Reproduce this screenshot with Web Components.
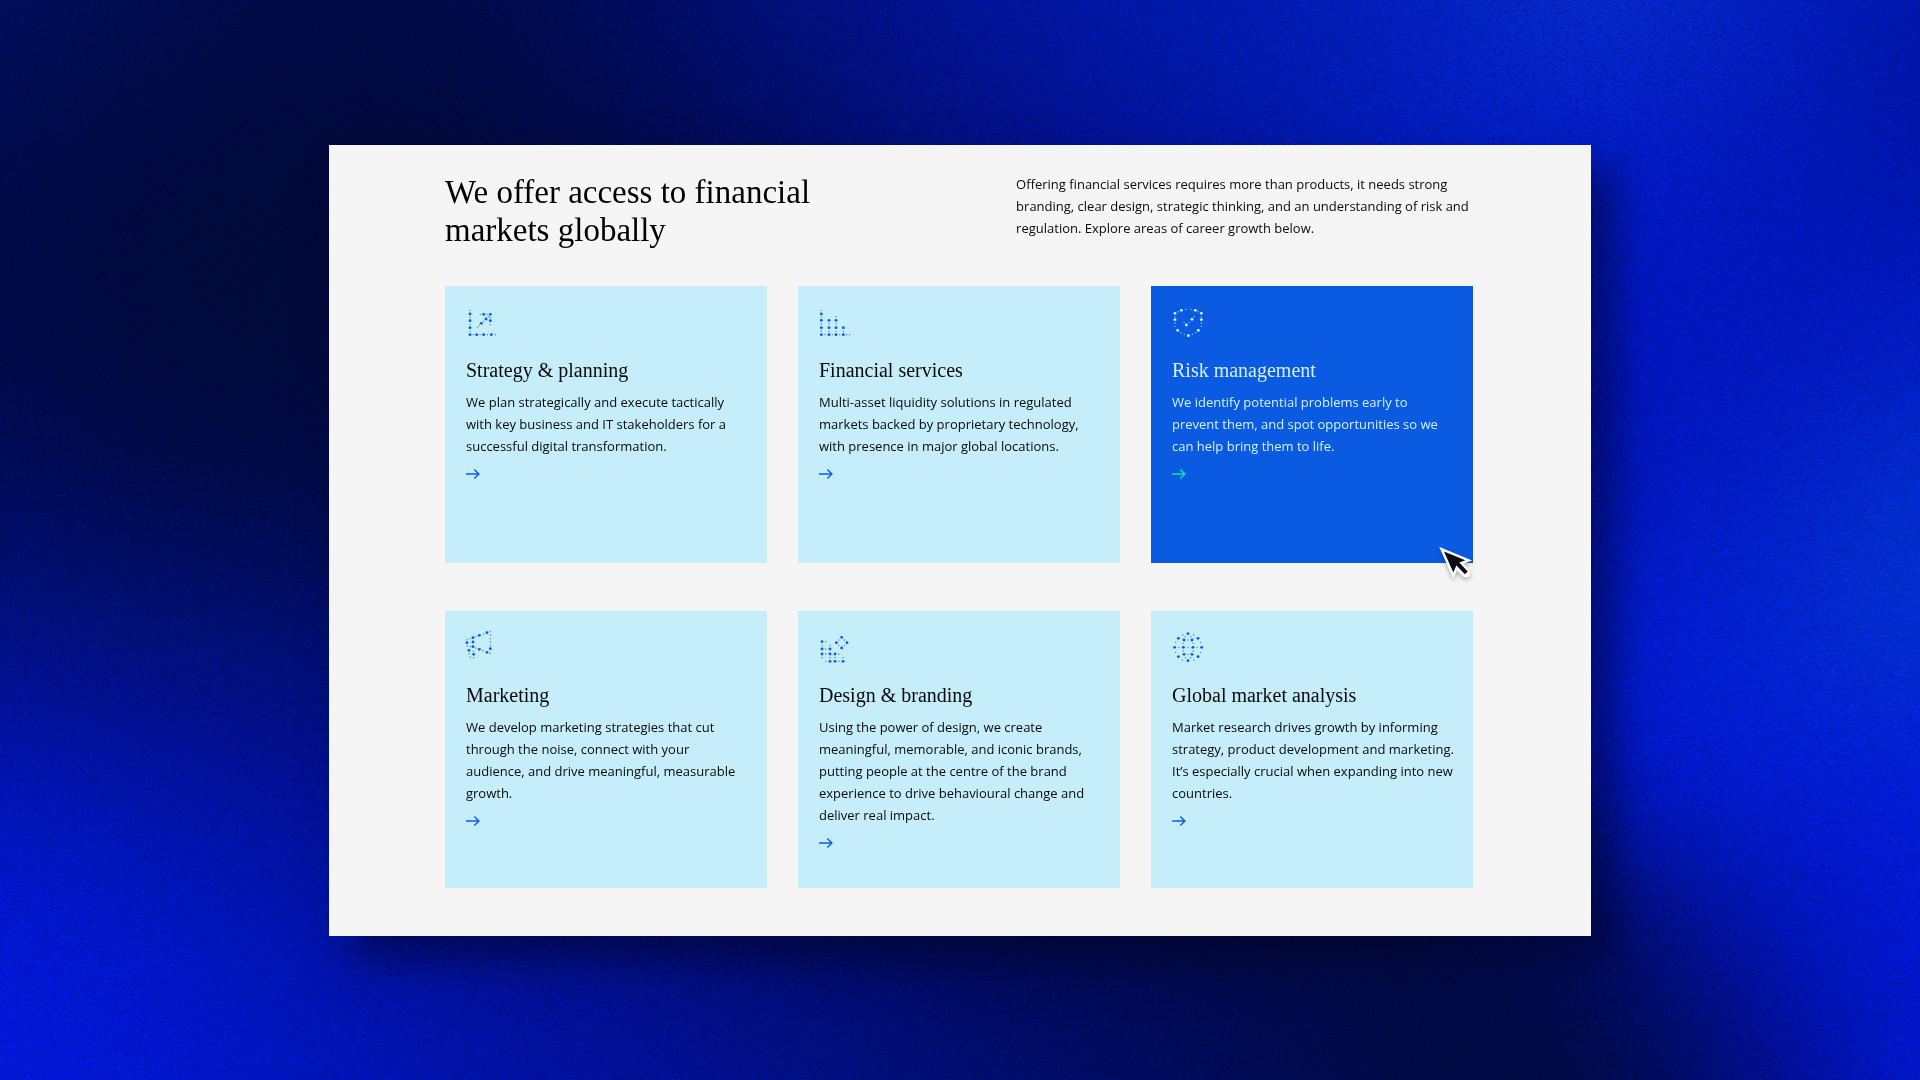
<!DOCTYPE html>
<html lang="en">
<head>
<meta charset="utf-8">
<meta name="viewport" content="width=device-width, initial-scale=1">
<title>Financial markets</title>
<style>
body {
    margin: 0;
    background: #000a44;
    font-family: "Open Sans", Inter, sans-serif;
    color: #0a0a0a;
}
</style>
</head>
<body>
<page-stage>
    <offer-panel>
        <span slot="title">We offer access to financial markets globally</span>
        <span slot="intro">Offering financial services requires more than products, it needs strong branding, clear design, strategic thinking, and an understanding of risk and regulation. Explore areas of career growth below.</span>

        <service-card icon="strategy" name="Strategy &amp; planning">We plan strategically and execute tactically with key business and IT stakeholders for a successful digital transformation.</service-card>
        <service-card icon="finance" name="Financial services">Multi-asset liquidity solutions in regulated markets backed by proprietary technology, with presence in major global locations.</service-card>
        <service-card icon="risk" name="Risk management" active>We identify potential problems early to<br> prevent them, and spot opportunities so we<br> can help bring them to life.<mouse-pointer slot="overlay"></mouse-pointer></service-card>
        <service-card icon="marketing" name="Marketing">We develop marketing strategies that cut<br> through the noise, connect with your<br> audience, and drive meaningful, measurable growth.</service-card>
        <service-card icon="design" name="Design &amp; branding">Using the power of design, we create meaningful, memorable, and iconic brands, putting people at the centre of the brand experience to drive behavioural change and deliver real impact.</service-card>
        <service-card icon="globe" name="Global market analysis">Market research drives growth by informing strategy, product development and marketing. It’s especially crucial when expanding into new countries.</service-card>
    </offer-panel>
</page-stage>

<script>
// Colour mesh for the backdrop, rows from top to bottom
const mesh = [
    '00105e 000c50 000a48 000a4a 000c64 001080 00149c 0018a8 001cb4 0022c0 0a2cc8 0020c0 0014a8',
    '000a4c 00093e 000938 00093c 000a48 000c64 00107c 001294 0016a4 001cbc 001ccc 0018b8 0014a4',
    '000a46 000938 000938 000938 000a40 000a58 000e74 001290 0016a4 0016b4 0016c4 0014b8 0018c0',
    '000a58 000a42 000a42 000a40 000a40 000a58 000e74 001290 0016a4 0014b0 0014b8 001cc4 002ccc',
    '00107c 000f70 000e68 000c58 000c58 000c58 000e74 001290 0016a4 0018b8 0018cc 0024d0 0034cc',
    '0014b4 0012a0 001094 00107c 00107c 000c64 000a54 000a48 000a44 0010a0 0018d4 001cd4 001cd4',
    '0018d4 0016c4 0014a8 001294 001080 000c6c 000a58 000a4a 000a44 000a3e 000a54 0014b8 0018d4',
    '0018d8 0016d0 0014bc 0012a8 00109c 001088 000e74 000c66 000a54 000a44 000a3e 000c80 0018d0'
].map(row => row.split(' ').map(hex => [0, 2, 4].map(i => parseInt(hex.substr(i, 2), 16))));

// Dots of the icons: big ones first, then small ones
const icons = {
    strategy: {
        box: '33 21 96 96',
        big: '45,42 45,62 45,83 45,104 65,104 86,104 109,104 86,43 106,43 106,62 93,57 79,70',
        small: '45,31 45,52 45,73 45,94 55,104 75,104 97,104 121,104 76,43 96,43 106,53 106,73 100,50 86,64 73,76 68,82'
    },
    finance: {
        box: '27 21 96 96',
        big: '34,42 34,61 34,83 34,104 57,61 57,83 57,104 78,61 78,83 78,104 100,83 100,104',
        small: '34,31 34,52 34,72 34,93 57,71 57,94 78,50 78,71 78,94 100,94 45,104 67,104 89,104 110,104 119,104'
    },
    risk: {
        box: '36 21 96 96',
        big: '64,31 106,31 45,40 124,40 45,59 124,59 53,91 115,91 85,107 79,75 96,58',
        small: '54,35 78,28 93,28 115,35 45,50 124,50 45,69 45,79 124,69 124,79 63,98 73,103 97,103 107,98 102,50 72,67 88,67'
    },
    marketing: {
        box: '33 30 96 96',
        big: '54,47 36,62 54,60 54,74 42,85 56,97 73,40 96,32 106,80 96,91 73,82',
        small: '36,53 45,50 37,72 46,74 63,43 62,78 86,36 84,86 106,28 106,39 106,50 106,60 106,71 106,95 43,95 46,105 55,88 56,107'
    },
    design: {
        box: '27 30 96 96',
        big: '36,59 36,81 36,96 60,81 60,96 75,96 60,118 75,118 99,118 95,46 79,62 111,62 95,78',
        small: '47,59 36,70 60,70 47,81 47,96 36,107 60,107 47,118 87,96 75,107 99,107 87,118 86,54 103,54 86,70 103,70'
    },
    globe: {
        box: '36 30 96 96',
        big: '84,35 55,49 114,49 44,76 125,76 55,104 114,104 84,116 72,54 96,54 70,76 99,76 72,97 96,97',
        small: '68,38 101,38 75,44 92,44 47,61 122,61 47,91 122,91 67,114 101,114 70,64 99,64 70,87 99,87 57,76 84,76 111,76 84,54 84,97 77,107 92,107'
    }
};

class PageStage extends HTMLElement {
    constructor() {
        super();
        this.attachShadow({ mode: 'open' });
        this.shadowRoot.innerHTML = `
<style>
:host {
    display: flex;
    justify-content: center;
    align-items: flex-start;
    position: relative;
    box-sizing: border-box;
    min-height: 100vh;
    padding: 145px 24px 144px;
}

canvas {
    position: absolute;
    inset: 0;
    width: 100%;
    height: 100%;
}
</style>
<canvas aria-hidden="true"></canvas>
<slot></slot>
`;
    }

    connectedCallback() {
        this.paint();
        this.onResize = () => this.paint();
        window.addEventListener('resize', this.onResize);
    }

    disconnectedCallback() {
        window.removeEventListener('resize', this.onResize);
    }

    // B-spline weights for four neighbouring mesh points
    weights(count, size) {
        const list = [];
        for (let i = 0; i < size; i++) {
            const pos = i / (size - 1) * (count - 1);
            const base = Math.min(Math.floor(pos), count - 2);
            const t = pos - base;
            const w = [
                (1 - t) ** 3 / 6,
                (3 * t ** 3 - 6 * t ** 2 + 4) / 6,
                (-3 * t ** 3 + 3 * t ** 2 + 3 * t + 1) / 6,
                t ** 3 / 6
            ];
            const idx = [-1, 0, 1, 2].map(d => Math.max(0, Math.min(count - 1, base + d)));
            list.push({ w, idx });
        }
        return list;
    }

    paint() {
        const canvas = this.shadowRoot.querySelector('canvas');
        const width = canvas.width = Math.max(2, this.clientWidth);
        const height = canvas.height = Math.max(2, this.clientHeight);
        const ctx = canvas.getContext('2d');
        const image = ctx.createImageData(width, height);
        const cols = this.weights(mesh[0].length, width);
        const rows = this.weights(mesh.length, height);
        let seed = 7;
        let last = 0;
        let p = 0;

        for (let y = 0; y < height; y++) {
            const { w: wy, idx: iy } = rows[y];
            const line = mesh[0].map((_, c) => [0, 1, 2].map(k =>
                wy.reduce((sum, w, j) => sum + w * mesh[iy[j]][c][k], 0)));
            for (let x = 0; x < width; x++) {
                const { w, idx } = cols[x];
                seed = (Math.imul(seed, 1664525) + 1013904223) >>> 0;
                const rnd = seed / 4294967296 - 0.5;
                const grain = 1 + (rnd + last * 0.5) * 0.22;
                last = rnd;
                for (let k = 0; k < 3; k++) {
                    const v = w[0] * line[idx[0]][k] + w[1] * line[idx[1]][k] +
                        w[2] * line[idx[2]][k] + w[3] * line[idx[3]][k];
                    image.data[p++] = v * grain;
                }
                image.data[p++] = 255;
            }
        }
        ctx.putImageData(image, 0, 0);
    }
}

class OfferPanel extends HTMLElement {
    constructor() {
        super();
        this.attachShadow({ mode: 'open' });
        this.shadowRoot.innerHTML = `
<style>
:host {
    display: block;
    position: relative;
    box-sizing: border-box;
    width: 100%;
    max-width: 1262px;
    padding: 28px 118px 48px 116px;
    background: #f5f5f5;
    box-shadow: 24px 24px 40px rgba(0, 2, 24, 0.5);
}

header {
    display: grid;
    grid-template-columns: 5fr 4fr;
    margin-bottom: 37px;
}

h1 {
    max-width: 400px;
    margin: 0;
    font: 400 33px/38px "Liberation Serif", serif;
    color: #000;
}

p {
    margin: 0;
    font-size: 13px;
    line-height: 22px;
}

.cards {
    display: grid;
    grid-template-columns: repeat(3, 1fr);
    gap: 48px 31px;
}
</style>
<header>
    <h1><slot name="title"></slot></h1>
    <p><slot name="intro"></slot></p>
</header>
<div class="cards"><slot></slot></div>
`;
    }
}

class DotIcon extends HTMLElement {
    constructor() {
        super();
        this.attachShadow({ mode: 'open' });
    }

    connectedCallback() {
        const icon = icons[this.getAttribute('name')];
        const dots = (list, r) => list.split(' ').map(dot => {
            const [x, y] = dot.split(',');
            return `<circle cx="${x}" cy="${y}" r="${r}"/>`;
        }).join('');

        this.shadowRoot.innerHTML = `
<style>
:host {
    display: block;
    width: 32px;
    height: 32px;
}

svg {
    display: block;
    overflow: visible;
    fill: currentColor;
}
</style>
<svg width="32" height="32" viewBox="${icon.box}" aria-hidden="true">
    ${dots(icon.big, 4.3)}
    <g opacity="0.8">${dots(icon.small, 2)}</g>
</svg>
`;
    }
}

class ServiceCard extends HTMLElement {
    constructor() {
        super();
        this.attachShadow({ mode: 'open' });
    }

    connectedCallback() {
        this.shadowRoot.innerHTML = `
<style>
:host {
    --accent: #0b5cee;
    --icon: #0b5cee;
    display: block;
    position: relative;
    box-sizing: border-box;
    min-height: 277px;
    padding: 21px 16px 21px 21px;
    background: #c6edfa;
}

:host([active]) {
    --accent: #14e0ae;
    --icon: #d4f0ff;
    background: #0a5be2;
    color: #d4f0ff;
}

dot-icon {
    color: var(--icon);
    margin-bottom: 19px;
}

h2 {
    margin: 0 0 9px;
    font: 400 20px/24px "Liberation Serif", serif;
}

p {
    margin: 0 0 12px;
    font-size: 13px;
    line-height: 22px;
}

a {
    display: block;
    width: 14px;
    color: var(--accent);
}

a svg {
    display: block;
    fill: none;
    stroke: currentColor;
    stroke-width: 1.4;
}
</style>
<dot-icon name="${this.getAttribute('icon')}"></dot-icon>
<h2></h2>
<p><slot></slot></p>
<a href="#"><svg width="14" height="10" viewBox="0 0 14 10" aria-hidden="true"><path d="M0 5h13M8.300 .600L12.900 5L8.300 9.400"/></svg></a>
<slot name="overlay"></slot>
`;
        this.shadowRoot.querySelector('h2').textContent = this.getAttribute('name');
        this.shadowRoot.querySelector('a').setAttribute('aria-label', this.getAttribute('name'));
    }
}

class MousePointer extends HTMLElement {
    constructor() {
        super();
        this.attachShadow({ mode: 'open' });
        this.shadowRoot.innerHTML = `
<style>
:host {
    position: absolute;
    right: -1px;
    bottom: -18px;
}

svg {
    display: block;
    overflow: visible;
    filter: drop-shadow(0 2px 2px rgba(0, 0, 0, 0.3));
}
</style>
<svg width="36" height="36" viewBox="0 0 36 36" aria-hidden="true">
    <path d="M18 18L28 28" stroke="#fff" stroke-width="9" stroke-linecap="round"/>
    <path d="M6 6.500L27.300 15.300L19.300 18.300L15.300 27.500Z" fill="#fff" stroke="#fff" stroke-width="5"/>
    <path d="M6 6.500L27.300 15.300L19.300 18.300L15.300 27.500Z" fill="#0c0d14"/>
    <path d="M18 17L28.300 27.800" stroke="#0c0d14" stroke-width="4"/>
</svg>
`;
    }
}

window.customElements.define('page-stage', PageStage);
window.customElements.define('offer-panel', OfferPanel);
window.customElements.define('dot-icon', DotIcon);
window.customElements.define('service-card', ServiceCard);
window.customElements.define('mouse-pointer', MousePointer);
</script>
</body>
</html>
